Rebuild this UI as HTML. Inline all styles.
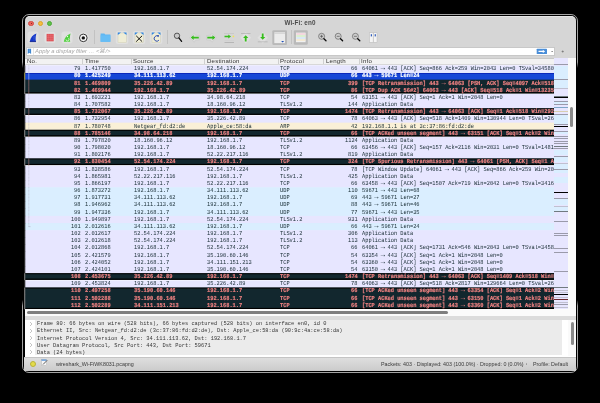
<!DOCTYPE html>
<html><head><meta charset="utf-8">
<style>
*{box-sizing:border-box;margin:0;padding:0}
html,body{width:600px;height:403px;overflow:hidden;background:#000}
body{position:relative;font-family:"Liberation Sans",sans-serif}
.abs{position:absolute}
#outline{position:absolute;left:22px;top:14px;width:556px;height:359px;border:1px solid #a4a4a4;border-radius:7px}
#win{position:absolute;left:24.8px;top:16.2px;width:550.8px;height:354px;background:#d6d6d6;border-radius:5px;overflow:hidden;box-shadow:inset 0 0.8px 0 #ececec}
.tl{position:absolute;width:5.8px;height:5.8px;border-radius:50%;top:20.5px}
#title{position:absolute;left:0;width:600px;top:19.3px;text-align:center;font-size:6.3px;will-change:transform;font-weight:bold;color:#4a4a4a;letter-spacing:0.1px}
.sep{position:absolute;top:30.3px;width:1px;height:13.5px;background:#c2c2c2}
#filter{position:absolute;left:26px;top:46.8px;width:529px;height:8.8px;background:#fff;border:0.5px solid #c8c8c8}
#ftext{position:absolute;left:35.2px;top:47.4px;font-size:5.85px;font-style:italic;color:#a6a6a6;line-height:8px;will-change:transform}
#hdr{position:absolute;left:25px;top:57.5px;width:529px;height:7.5px;background:#f2f2f2;border-bottom:0.5px solid #d8d8d8;border-top:0.5px solid #c8c8c8}
.h{position:absolute;top:57.2px;font-size:6.1px;color:#333;line-height:7px;letter-spacing:0.2px;will-change:transform}
.hs{position:absolute;top:59px;width:1px;height:5px;background:#cfcfcf}
#list{position:absolute;left:25px;top:65px;width:529px;height:244px;overflow:hidden;background:#fff}
.r{position:absolute;left:25px;width:529px;text-rendering:geometricPrecision;height:7.8px;font-family:"Liberation Mono",monospace;font-size:5.33px;line-height:7.17px;color:#12272e;white-space:nowrap;overflow:hidden}
.r span{position:absolute;top:0.9px;transform:scaleY(1.15);transform-origin:0 50%;will-change:transform}
.b{color:#f08282;font-weight:bold;-webkit-text-stroke:0.15px #f08282}
.s{color:#fff;font-weight:bold;-webkit-text-stroke:0.15px #fff}
.ar2{font-style:normal;display:inline-block;width:3.198px;text-align:left;text-indent:-2.0px;font-family:"Liberation Sans",sans-serif;font-size:7.2px;line-height:1px;font-weight:normal;-webkit-text-stroke:0}
.no{right:473.4px;text-align:right}
.tm{left:60px}.sr{left:109px}.ds{left:182px}.pr{left:255px}
.ln{right:196.4px;text-align:right}.in{left:336.6px}
#mm{position:absolute;left:554px;top:57.5px;width:13.5px;height:251.5px;background:#e7e6ff;overflow:hidden}
#vtrack{position:absolute;left:567.5px;top:57.5px;width:8px;height:251.5px;background:#fafafa}
#vthumb{position:absolute;left:570px;top:107.4px;width:3px;height:20px;border-radius:1.5px;background:#8a8a8a}
#hbar{position:absolute;left:25px;top:309px;width:551px;height:7px;background:#fbfbfb}
#hthumb{position:absolute;left:27px;top:311px;width:421px;height:3px;border-radius:1.5px;background:#7f7f7f}
#split{position:absolute;left:25px;top:316px;width:551px;height:4px;background:#dcdcdc}
#det{position:absolute;left:25px;top:320px;width:551px;height:36.5px;background:#fff}
#detbg{position:absolute;left:34.6px;top:320px;width:527px;height:35.3px;background:#ebebeb}
.d{position:absolute;left:36.5px;font-family:"Liberation Mono",monospace;font-size:5.36px;color:#363636;white-space:nowrap;line-height:7px;transform:scaleY(1.15);transform-origin:0 50%;will-change:transform}
.ar{position:absolute;left:29.3px;font-size:6px;color:#9a9a9a;line-height:7px;font-family:"Liberation Sans",sans-serif}
#status{position:absolute;left:24px;top:356.5px;width:552px;height:14.5px;background:linear-gradient(#dedede,#cbcbcb);border-top:0.5px solid #c4c4c4}
.st{position:absolute;top:360.9px;font-size:5.35px;color:#3a3a3a;line-height:6px;white-space:nowrap;will-change:transform}
</style></head><body>
<div id="outline"></div>
<div id="win"></div>
<div class="abs" style="left:21px;top:62px;width:3px;height:244px;background:linear-gradient(transparent,#000 6px,#000 238px,transparent)"></div>
<div class="abs" style="left:576px;top:62px;width:3px;height:244px;background:linear-gradient(transparent,#000 6px,#000 238px,transparent)"></div>
<div class="tl" style="left:28.4px;background:#ed6159;border:0.5px solid #d24c44"></div><div class="abs" style="left:30.6px;top:22.7px;width:1.4px;height:1.4px;border-radius:50%;background:#6e1a14"></div>
<div class="tl" style="left:37.5px;background:#f5bd3f;border:0.5px solid #dba32a"></div>
<div class="tl" style="left:46.5px;background:#5fc24a;border:0.5px solid #4aa836"></div>
<div id="title">Wi-Fi: en0</div>

<!-- toolbar icons -->
<svg class="abs" style="left:0;top:0" width="600" height="60" viewBox="0 0 600 60">
  <g fill="#e0e0e0">
    <rect x="27.5" y="31.5" width="11" height="12" rx="3"/>
    <rect x="44.5" y="32" width="11" height="11" rx="2.5"/>
    <rect x="61.5" y="31.5" width="11" height="12" rx="3"/>
    <circle cx="83.3" cy="37.9" r="5.6"/>
    <rect x="115.8" y="31" width="12.5" height="13" rx="2.5"/>
    <rect x="132.8" y="31" width="12.5" height="13" rx="2.5"/>
    <rect x="149.8" y="31" width="12.5" height="13" rx="2.5"/>

    <path d="M245.7 32 L251 37.7 L245.7 43.4 L240.4 37.7Z"/>
    <path d="M262.7 32 L268 37.7 L262.7 43.4 L257.4 37.7Z"/>
  </g>
  <!-- shark fin blue -->
  <path d="M29.8 41.6 C30.6 37.6 32.6 35 36.4 33.5 C35.6 36 35.4 38.8 35.9 41.6Z" fill="#1537c8"/>
  <path d="M29.8 41.6 h6.2" stroke="#0a1f90" stroke-width="0.9"/>
  <path d="M33 38 h2.5 M33.6 36.5 h1.8 M34 35.3 v5.5" stroke="#4a6ee0" stroke-width="0.35"/>
  <!-- stop red -->
  <rect x="46.6" y="33.9" width="7.1" height="7.4" fill="#df4f55"/>
  <path d="M48.4 34v7.3 M50.2 34v7.3 M52 34v7.3 M46.6 35.8h7.1 M46.6 37.6h7.1 M46.6 39.4h7.1" stroke="#ea8a8e" stroke-width="0.3"/>
  <!-- restart green fin -->
  <path d="M63.8 41.8 C64.6 37.8 66.6 35 70.6 33.4 C69.8 36 69.6 39 70.2 41.8Z" fill="#4fcf3d"/>
  <path d="M66 39.5 A1.5 1.5 0 1 0 68.3 38.2" fill="none" stroke="#f4fff0" stroke-width="0.8"/>
  <circle cx="67.5" cy="36.6" r="0.7" fill="#fff"/>
  <!-- options target -->
  <circle cx="83.3" cy="37.9" r="3.8" fill="#f8f8f8" stroke="#222" stroke-width="0.9"/>
  <circle cx="83.3" cy="37.9" r="1.7" fill="#111"/>
  <!-- folder -->
  <path d="M100.6 33.6 h3.8 l0.8 1 h5.2 v7.2 h-9.8z" fill="#5fb6f2"/>
  <rect x="100.6" y="35.3" width="9.8" height="6.5" fill="#66bdf5"/>
  <!-- file -->
  <g>
  <rect x="118" y="33" width="8.3" height="9.7" fill="#efedd6" stroke="#cfcdb6" stroke-width="0.5"/>
  <path d="M117.8 32.6 h3.2 l-3.2 2.4z M126.5 32.6 h-3.2 l3.2 2.4z" fill="#2f86e6"/>
  <rect x="135" y="33" width="8.3" height="9.7" fill="#efedd6" stroke="#cfcdb6" stroke-width="0.5"/>
  <path d="M134.8 32.6 h3.2 l-3.2 2.4z M143.5 32.6 h-3.2 l3.2 2.4z" fill="#2f86e6"/>
  <path d="M136.2 35.8 L142.1 41.6 M142.1 35.8 L136.2 41.6" stroke="#151515" stroke-width="1"/>
  <rect x="152" y="33" width="8.3" height="9.7" fill="#efedd6" stroke="#cfcdb6" stroke-width="0.5"/>
  <path d="M151.8 32.6 h3.2 l-3.2 2.4z M160.5 32.6 h-3.2 l3.2 2.4z" fill="#2f86e6"/>
  <path d="M158.2 36.2 A2.7 2.7 0 1 0 158.9 40.2" fill="none" stroke="#2f4fb0" stroke-width="1"/>
  <path d="M156.6 35.2 l2.4 -0.2 l-0.4 2.3z" fill="#2f4fb0"/>
  </g>
  <!-- find magnifier -->
  <circle cx="177" cy="35.8" r="2.7" fill="#c9c9c9" stroke="#3a3a3a" stroke-width="0.8"/>
  <path d="M178.9 37.9 L181.6 41.3" stroke="#0a0a0a" stroke-width="1.3" stroke-linecap="round"/>
  <!-- back arrow -->
  <g fill="#dcdcdc" stroke="#c2c2c2" stroke-width="0.45">
  <path d="M189.6 37.7 L194.2 33.2 L195.6 35.2 L199.6 35.6 L199.6 39.8 L195.6 40.2 L194.2 42.2Z"/>
  <path d="M216.5 37.7 L211.9 33.2 L210.5 35.2 L206.5 35.6 L206.5 39.8 L210.5 40.2 L211.9 42.2Z"/>
  </g>
  <path d="M190.8 37.6 L193.6 35.3 L193.6 36.7 L198.8 36.7 L198.8 38.5 L193.6 38.5 L193.6 39.9Z" fill="#36bd1c"/>
  <!-- forward arrow -->
  <path d="M215.3 37.6 L212.5 35.3 L212.5 36.7 L207.3 36.7 L207.3 38.5 L212.5 38.5 L212.5 39.9Z" fill="#36bd1c"/>
  <!-- go to packet -->
  <rect x="224" y="33" width="10" height="0.5" fill="#bdbdbd"/>
  <path d="M231 36.5 L228.3 34.4 L228.3 35.7 L224.5 35.7 L224.5 37.3 L228.3 37.3 L228.3 38.6Z" fill="#36bd1c"/>
  <circle cx="233.4" cy="36.4" r="0.9" fill="#f3e35a"/>
  <rect x="224.5" y="40.2" width="9.5" height="0.5" fill="#cfcfcf"/><rect x="224.5" y="42.3" width="9.5" height="0.7" fill="#a8a8a8"/>
  <!-- first packet -->
  <rect x="241" y="33.1" width="9.5" height="0.6" fill="#a8a8a8"/>
  <path d="M245.7 35.2 L243.1 37.9 L244.8 37.9 L244.8 41.4 L246.6 41.4 L246.6 37.9 L248.3 37.9Z" fill="#36bd1c"/>
  <!-- last packet -->
  <rect x="257.8" y="41.6" width="9.8" height="0.6" fill="#a8a8a8"/>
  <path d="M262.7 39.8 L260.1 37.1 L261.8 37.1 L261.8 33.6 L263.6 33.6 L263.6 37.1 L265.3 37.1Z" fill="#36bd1c"/>
  <!-- autoscroll pressed -->
  <rect x="272.3" y="30.3" width="14.7" height="14.7" rx="1.2" fill="#b9b9b9"/>
  <rect x="274.3" y="32.3" width="10.7" height="10.8" fill="#ececec"/>
  <rect x="274.3" y="33.3" width="10.7" height="0.6" fill="#c9c9c9"/>
  <path d="M281.1 41 L284.1 41 L282.6 42.6Z" fill="#1f4fb8"/>
  <!-- colorize pressed -->
  <rect x="293.8" y="30.2" width="14" height="14.6" rx="1.2" fill="#b9b9b9"/>
  <rect x="296" y="32.6" width="9.6" height="9.6" fill="#f0f0f0"/>
  <rect x="296.3" y="33.2" width="9" height="1.6" fill="#f5d2dc"/>
  <rect x="296.3" y="35.2" width="9" height="1.6" fill="#d6f0c8"/>
  <rect x="296.3" y="37.2" width="9" height="1.6" fill="#d4e6f8"/>
  <rect x="296.3" y="39.2" width="9" height="1.6" fill="#f6e8cc"/>
  <!-- zoom in/out/normal -->
  <g fill="#cfcfcf" stroke="#6a6a6a" stroke-width="0.75">
   <circle cx="321.6" cy="36.3" r="3"/>
   <circle cx="338.2" cy="36.3" r="3"/>
   <circle cx="355.4" cy="36.3" r="3"/>
  </g>
  <g fill="none" stroke="#3a3a3a" stroke-width="0.6">
   <path d="M320.1 36.3h3M321.6 34.8v3"/><path d="M336.7 36.3h3"/><path d="M353.9 36.3h3"/>
  </g>
  <g stroke="#0a0a0a" stroke-width="1.3" stroke-linecap="round">
   <path d="M323.9 38.7L326 40.8"/><path d="M340.5 38.7L342.6 40.8"/><path d="M357.7 38.7L359.8 40.8"/>
  </g>
  <!-- colorize stripes lighter -->
  <!-- resize columns -->
  <rect x="369.6" y="32.8" width="3.5" height="9.4" fill="#f4f4f4" stroke="#b5b5b5" stroke-width="0.4"/>
  <rect x="373.5" y="32.8" width="3.5" height="9.4" fill="#f4f4f4" stroke="#b5b5b5" stroke-width="0.4"/>
  <rect x="370.8" y="34.2" width="1.1" height="2.2" fill="#1f4fb8"/>
  <rect x="374.7" y="34.2" width="1.1" height="2.2" fill="#1f4fb8"/>
</svg>
<div class="sep" style="left:94.4px"></div>
<div class="sep" style="left:166.7px"></div>
<div class="sep" style="left:290.8px"></div>

<div id="filter"></div>
<svg class="abs" style="left:0;top:0" width="600" height="60">
  <path d="M27.7 48.7 h3.4 v5.3 l-1.7 -1.3 l-1.7 1.3z" fill="#3d86d0"/><path d="M29.4 49.3 v3" stroke="#8ab8e8" stroke-width="0.5"/>
  <rect x="33.1" y="47.6" width="0.5" height="7.6" fill="#d0d0d0"/>
  <rect x="536.7" y="48.7" width="10.3" height="5.3" rx="0.6" fill="#4a8ed8"/>
  <path d="M538.5 50.8 h4.3 v-1 l2.3 1.6 l-2.3 1.6 v-1 h-4.3z" fill="#fff"/>
  <path d="M551.2 51 h1.8 l-0.9 1.1z" fill="#444"/>
  <path d="M561.6 51.5 h2.2 M562.7 50.4 v2.2" stroke="#666" stroke-width="0.6"/>
</svg>
<div id="ftext">Apply a display filter … &lt;⌘/&gt;</div>

<div id="hdr"></div>
<div class="h" style="left:27.4px">No.</div>
<div class="hs" style="left:82px"></div>
<div class="h" style="left:85px">Time</div>
<div class="hs" style="left:131px"></div>
<div class="h" style="left:133px">Source</div>
<div class="hs" style="left:204px"></div>
<div class="h" style="left:206.6px">Destination</div>
<div class="hs" style="left:278px"></div>
<div class="h" style="left:280px">Protocol</div>
<div class="hs" style="left:323.3px"></div>
<div class="h" style="left:325.6px">Length</div>
<div class="hs" style="left:359px"></div>
<div class="h" style="left:361px">Info</div>

<div id="list"></div>
<svg class="abs" style="left:0;top:0" width="600" height="403"><rect x="25" y="65.300" width="529" height="7.770" fill="#e7e6ff"/><rect x="25" y="72.470" width="529" height="7.770" fill="#1546d6"/><rect x="25" y="72.170" width="529" height="0.9" fill="#f8f8ff"/><rect x="25" y="73.070" width="529" height="7.170" fill="#1546d6"/><rect x="25" y="73.070" width="529" height="0.9" fill="#0a24b8"/><rect x="25" y="79.640" width="529" height="13.740" fill="#12272e"/><rect x="25"  y="92.180" width="529" height="1.2" fill="#000" opacity="1.0"/><rect x="25" y="93.980" width="529" height="14.940" fill="#e7e6ff"/><rect x="25" y="108.320" width="529" height="6.570" fill="#12272e"/><rect x="25" y="108.320" width="529" height="1.0" fill="#000" opacity="0.95"/><rect x="25"  y="113.690" width="529" height="1.2" fill="#000" opacity="1.0"/><rect x="25" y="115.490" width="529" height="7.770" fill="#e7e6ff"/><rect x="25" y="122.660" width="529" height="7.770" fill="#faf0d7"/><rect x="25" y="129.830" width="529" height="6.570" fill="#12272e"/><rect x="25" y="129.830" width="529" height="1.0" fill="#000" opacity="0.95"/><rect x="25"  y="135.200" width="529" height="1.2" fill="#000" opacity="1.0"/><rect x="25" y="137.000" width="529" height="22.110" fill="#e7e6ff"/><rect x="25" y="158.510" width="529" height="6.570" fill="#12272e"/><rect x="25" y="158.510" width="529" height="1.0" fill="#000" opacity="0.95"/><rect x="25"  y="163.880" width="529" height="1.2" fill="#000" opacity="1.0"/><rect x="25" y="165.680" width="529" height="22.110" fill="#e7e6ff"/><rect x="25" y="187.190" width="529" height="29.280" fill="#daeeff"/><rect x="25" y="215.870" width="529" height="7.770" fill="#e7e6ff"/><rect x="25" y="223.040" width="529" height="7.770" fill="#daeeff"/><rect x="25" y="230.210" width="529" height="43.620" fill="#e7e6ff"/><rect x="25" y="273.230" width="529" height="6.570" fill="#12272e"/><rect x="25" y="273.230" width="529" height="1.0" fill="#000" opacity="0.95"/><rect x="25"  y="278.600" width="529" height="1.2" fill="#000" opacity="1.0"/><rect x="25" y="280.400" width="529" height="7.770" fill="#e7e6ff"/><rect x="25" y="287.570" width="529" height="21.510" fill="#12272e"/><rect x="25" y="287.570" width="529" height="1.0" fill="#000" opacity="0.95"/><rect x="25"  y="307.880" width="529" height="1.2" fill="#000" opacity="1.0"/><rect x="24" y="65.300" width="1.3" height="7.470" fill="#2a2a2a"/><line x1="28.8" y1="65.300" x2="28.8" y2="72.470" stroke="#b4b4c4" stroke-width="0.6" stroke-dasharray="0.8 0.6"/><rect x="24" y="72.470" width="1.3" height="7.470" fill="#8a8440"/><line x1="28.8" y1="72.470" x2="28.8" y2="79.640" stroke="#c8d0ff" stroke-width="0.6"/><rect x="24" y="79.640" width="1.3" height="7.470" fill="#6e6e6e"/><line x1="28.8" y1="79.640" x2="28.8" y2="86.810" stroke="#b87878" stroke-width="0.6"/><rect x="24" y="86.810" width="1.3" height="7.470" fill="#6e6e6e"/><line x1="28.8" y1="86.810" x2="28.8" y2="93.980" stroke="#b87878" stroke-width="0.6"/><rect x="24" y="93.980" width="1.3" height="7.470" fill="#2a2a2a"/><line x1="28.8" y1="93.980" x2="28.8" y2="101.150" stroke="#b4b4c4" stroke-width="0.6" stroke-dasharray="0.8 0.6"/><rect x="24" y="101.150" width="1.3" height="7.470" fill="#2a2a2a"/><line x1="28.8" y1="101.150" x2="28.8" y2="108.320" stroke="#b4b4c4" stroke-width="0.6" stroke-dasharray="0.8 0.6"/><rect x="24" y="108.320" width="1.3" height="7.470" fill="#6e6e6e"/><line x1="28.8" y1="108.320" x2="28.8" y2="115.490" stroke="#b87878" stroke-width="0.6"/><rect x="24" y="115.490" width="1.3" height="7.470" fill="#2a2a2a"/><line x1="28.8" y1="115.490" x2="28.8" y2="122.660" stroke="#b4b4c4" stroke-width="0.6" stroke-dasharray="0.8 0.6"/><rect x="24" y="122.660" width="1.3" height="7.470" fill="#2a2a2a"/><line x1="28.8" y1="122.660" x2="28.8" y2="129.830" stroke="#b4b4c4" stroke-width="0.6" stroke-dasharray="0.8 0.6"/><rect x="24" y="129.830" width="1.3" height="7.470" fill="#6e6e6e"/><line x1="28.8" y1="129.830" x2="28.8" y2="137.000" stroke="#b87878" stroke-width="0.6"/><rect x="24" y="137.000" width="1.3" height="7.470" fill="#2a2a2a"/><line x1="28.8" y1="137.000" x2="28.8" y2="144.170" stroke="#b4b4c4" stroke-width="0.6" stroke-dasharray="0.8 0.6"/><rect x="24" y="144.170" width="1.3" height="7.470" fill="#2a2a2a"/><line x1="28.8" y1="144.170" x2="28.8" y2="151.340" stroke="#b4b4c4" stroke-width="0.6" stroke-dasharray="0.8 0.6"/><rect x="24" y="151.340" width="1.3" height="7.470" fill="#2a2a2a"/><line x1="28.8" y1="151.340" x2="28.8" y2="158.510" stroke="#b4b4c4" stroke-width="0.6" stroke-dasharray="0.8 0.6"/><rect x="24" y="158.510" width="1.3" height="7.470" fill="#6e6e6e"/><line x1="28.8" y1="158.510" x2="28.8" y2="165.680" stroke="#b87878" stroke-width="0.6"/><rect x="24" y="165.680" width="1.3" height="7.470" fill="#2a2a2a"/><line x1="28.8" y1="165.680" x2="28.8" y2="172.850" stroke="#b4b4c4" stroke-width="0.6" stroke-dasharray="0.8 0.6"/><rect x="24" y="172.850" width="1.3" height="7.470" fill="#2a2a2a"/><line x1="28.8" y1="172.850" x2="28.8" y2="180.020" stroke="#b4b4c4" stroke-width="0.6" stroke-dasharray="0.8 0.6"/><rect x="24" y="180.020" width="1.3" height="7.470" fill="#2a2a2a"/><line x1="28.8" y1="180.020" x2="28.8" y2="187.190" stroke="#b4b4c4" stroke-width="0.6" stroke-dasharray="0.8 0.6"/><rect x="24" y="187.190" width="1.3" height="7.470" fill="#2a2a2a"/><line x1="28.8" y1="187.190" x2="28.8" y2="194.360" stroke="#b4b4c4" stroke-width="0.6" stroke-dasharray="0.8 0.6"/><rect x="24" y="194.360" width="1.3" height="7.470" fill="#2a2a2a"/><line x1="28.8" y1="194.360" x2="28.8" y2="201.530" stroke="#b4b4c4" stroke-width="0.6" stroke-dasharray="0.8 0.6"/><rect x="24" y="201.530" width="1.3" height="7.470" fill="#2a2a2a"/><line x1="28.8" y1="201.530" x2="28.8" y2="208.700" stroke="#b4b4c4" stroke-width="0.6" stroke-dasharray="0.8 0.6"/><rect x="24" y="208.700" width="1.3" height="7.470" fill="#2a2a2a"/><line x1="28.8" y1="208.700" x2="28.8" y2="215.870" stroke="#b4b4c4" stroke-width="0.6" stroke-dasharray="0.8 0.6"/><rect x="24" y="215.870" width="1.3" height="7.470" fill="#2a2a2a"/><line x1="28.8" y1="215.870" x2="28.8" y2="223.040" stroke="#b4b4c4" stroke-width="0.6" stroke-dasharray="0.8 0.6"/><rect x="24" y="223.040" width="1.3" height="7.470" fill="#2a2a2a"/><line x1="28.8" y1="223.040" x2="28.8" y2="226.625" stroke="#b4b4c4" stroke-width="0.6" stroke-dasharray="0.8 0.6"/><line x1="28.5" y1="226.625" x2="30.5" y2="226.625" stroke="#b4b4c4" stroke-width="0.6"/><rect x="24" y="230.210" width="1.3" height="7.470" fill="#2a2a2a"/><rect x="24" y="237.380" width="1.3" height="7.470" fill="#2a2a2a"/><rect x="24" y="244.550" width="1.3" height="7.470" fill="#2a2a2a"/><rect x="24" y="251.720" width="1.3" height="7.470" fill="#2a2a2a"/><rect x="24" y="258.890" width="1.3" height="7.470" fill="#2a2a2a"/><rect x="24" y="266.060" width="1.3" height="7.470" fill="#2a2a2a"/><rect x="24" y="273.230" width="1.3" height="7.470" fill="#6e6e6e"/><rect x="24" y="280.400" width="1.3" height="7.470" fill="#2a2a2a"/><rect x="24" y="287.570" width="1.3" height="7.470" fill="#6e6e6e"/><rect x="24" y="294.740" width="1.3" height="7.470" fill="#6e6e6e"/><rect x="24" y="301.910" width="1.3" height="7.470" fill="#6e6e6e"/></svg><div class="r t" style="top:65.30px"><span class="no">79</span><span class="tm">1.417750</span><span class="sr">192.168.1.7</span><span class="ds">52.54.174.224</span><span class="pr">TCP</span><span class="ln">66</span><span class="in">64061 <i class="ar2">→</i> 443 [ACK] Seq=866 Ack=259 Win=2043 Len=0 TSval=3458077431</span></div>
<div class="r s" style="top:72.47px"><span class="no">80</span><span class="tm">1.425249</span><span class="sr">34.111.113.62</span><span class="ds">192.168.1.7</span><span class="pr">UDP</span><span class="ln">66</span><span class="in">443 <i class="ar2">→</i> 59671 Len=24</span></div>
<div class="r b" style="top:79.64px"><span class="no">81</span><span class="tm">1.469809</span><span class="sr">35.226.42.89</span><span class="ds">192.168.1.7</span><span class="pr">TCP</span><span class="ln">399</span><span class="in">[TCP Retransmission] 443 <i class="ar2">→</i> 64063 [PSH, ACK] Seq=4097 Ack=518 Win=13235</span></div>
<div class="r b" style="top:86.81px"><span class="no">82</span><span class="tm">1.469944</span><span class="sr">192.168.1.7</span><span class="ds">35.226.42.89</span><span class="pr">TCP</span><span class="ln">86</span><span class="in">[TCP Dup ACK 56#2] 64063 <i class="ar2">→</i> 443 [ACK] Seq=518 Ack=1 Win=132352 Len=0</span></div>
<div class="r t" style="top:93.98px"><span class="no">83</span><span class="tm">1.693221</span><span class="sr">192.168.1.7</span><span class="ds">34.98.64.218</span><span class="pr">TCP</span><span class="ln">54</span><span class="in">63151 <i class="ar2">→</i> 443 [ACK] Seq=1 Ack=1 Win=2048 Len=0</span></div>
<div class="r t" style="top:101.15px"><span class="no">84</span><span class="tm">1.707582</span><span class="sr">192.168.1.7</span><span class="ds">18.160.96.12</span><span class="pr">TLSv1.2</span><span class="ln">144</span><span class="in">Application Data</span></div>
<div class="r b" style="top:108.32px"><span class="no">85</span><span class="tm">1.732067</span><span class="sr">35.226.42.89</span><span class="ds">192.168.1.7</span><span class="pr">TCP</span><span class="ln">1474</span><span class="in">[TCP Retransmission] 443 <i class="ar2">→</i> 64063 [ACK] Seq=1 Ack=518 Win=29248</span></div>
<div class="r t" style="top:115.49px"><span class="no">86</span><span class="tm">1.732954</span><span class="sr">192.168.1.7</span><span class="ds">35.226.42.89</span><span class="pr">TCP</span><span class="ln">78</span><span class="in">64063 <i class="ar2">→</i> 443 [ACK] Seq=518 Ack=1409 Win=130944 Len=0 TSval=2622</span></div>
<div class="r a" style="top:122.66px"><span class="no">87</span><span class="tm">1.780748</span><span class="sr">Netgear_fd:d2:de</span><span class="ds">Apple_ce:58:da</span><span class="pr">ARP</span><span class="ln">42</span><span class="in">192.168.1.1 is at 3c:37:86:fd:d2:de</span></div>
<div class="r b" style="top:129.83px"><span class="no">88</span><span class="tm">1.785146</span><span class="sr">34.98.64.218</span><span class="ds">192.168.1.7</span><span class="pr">TCP</span><span class="ln">66</span><span class="in">[TCP ACKed unseen segment] 443 <i class="ar2">→</i> 63151 [ACK] Seq=1 Ack=2 Win=2048</span></div>
<div class="r t" style="top:137.00px"><span class="no">89</span><span class="tm">1.797820</span><span class="sr">18.160.96.12</span><span class="ds">192.168.1.7</span><span class="pr">TLSv1.2</span><span class="ln">1124</span><span class="in">Application Data</span></div>
<div class="r t" style="top:144.17px"><span class="no">90</span><span class="tm">1.798020</span><span class="sr">192.168.1.7</span><span class="ds">18.160.96.12</span><span class="pr">TCP</span><span class="ln">66</span><span class="in">63456 <i class="ar2">→</i> 443 [ACK] Seq=157 Ack=2116 Win=2031 Len=0 TSval=1481234</span></div>
<div class="r t" style="top:151.34px"><span class="no">91</span><span class="tm">1.802176</span><span class="sr">192.168.1.7</span><span class="ds">52.22.217.116</span><span class="pr">TLSv1.2</span><span class="ln">819</span><span class="in">Application Data</span></div>
<div class="r b" style="top:158.51px"><span class="no">92</span><span class="tm">1.830454</span><span class="sr">52.54.174.224</span><span class="ds">192.168.1.7</span><span class="pr">TCP</span><span class="ln">324</span><span class="in">[TCP Spurious Retransmission] 443 <i class="ar2">→</i> 64061 [PSH, ACK] Seq=1 Ack=866</span></div>
<div class="r t" style="top:165.68px"><span class="no">93</span><span class="tm">1.838586</span><span class="sr">192.168.1.7</span><span class="ds">52.54.174.224</span><span class="pr">TCP</span><span class="ln">78</span><span class="in">[TCP Window Update] 64061 <i class="ar2">→</i> 443 [ACK] Seq=866 Ack=259 Win=2048</span></div>
<div class="r t" style="top:172.85px"><span class="no">94</span><span class="tm">1.865981</span><span class="sr">52.22.217.116</span><span class="ds">192.168.1.7</span><span class="pr">TLSv1.2</span><span class="ln">425</span><span class="in">Application Data</span></div>
<div class="r t" style="top:180.02px"><span class="no">95</span><span class="tm">1.866197</span><span class="sr">192.168.1.7</span><span class="ds">52.22.217.116</span><span class="pr">TCP</span><span class="ln">66</span><span class="in">63458 <i class="ar2">→</i> 443 [ACK] Seq=1507 Ack=719 Win=2042 Len=0 TSval=3416123</span></div>
<div class="r u" style="top:187.19px"><span class="no">96</span><span class="tm">1.873272</span><span class="sr">192.168.1.7</span><span class="ds">34.111.113.62</span><span class="pr">UDP</span><span class="ln">110</span><span class="in">59671 <i class="ar2">→</i> 443 Len=68</span></div>
<div class="r u" style="top:194.36px"><span class="no">97</span><span class="tm">1.917731</span><span class="sr">34.111.113.62</span><span class="ds">192.168.1.7</span><span class="pr">UDP</span><span class="ln">69</span><span class="in">443 <i class="ar2">→</i> 59671 Len=27</span></div>
<div class="r u" style="top:201.53px"><span class="no">98</span><span class="tm">1.946962</span><span class="sr">34.111.113.62</span><span class="ds">192.168.1.7</span><span class="pr">UDP</span><span class="ln">88</span><span class="in">443 <i class="ar2">→</i> 59671 Len=46</span></div>
<div class="r u" style="top:208.70px"><span class="no">99</span><span class="tm">1.947336</span><span class="sr">192.168.1.7</span><span class="ds">34.111.113.62</span><span class="pr">UDP</span><span class="ln">77</span><span class="in">59671 <i class="ar2">→</i> 443 Len=35</span></div>
<div class="r t" style="top:215.87px"><span class="no">100</span><span class="tm">1.949897</span><span class="sr">192.168.1.7</span><span class="ds">52.54.174.224</span><span class="pr">TLSv1.2</span><span class="ln">931</span><span class="in">Application Data</span></div>
<div class="r u" style="top:223.04px"><span class="no">101</span><span class="tm">2.012616</span><span class="sr">34.111.113.62</span><span class="ds">192.168.1.7</span><span class="pr">UDP</span><span class="ln">66</span><span class="in">443 <i class="ar2">→</i> 59671 Len=24</span></div>
<div class="r t" style="top:230.21px"><span class="no">102</span><span class="tm">2.012617</span><span class="sr">52.54.174.224</span><span class="ds">192.168.1.7</span><span class="pr">TLSv1.2</span><span class="ln">306</span><span class="in">Application Data</span></div>
<div class="r t" style="top:237.38px"><span class="no">103</span><span class="tm">2.012618</span><span class="sr">52.54.174.224</span><span class="ds">192.168.1.7</span><span class="pr">TLSv1.2</span><span class="ln">113</span><span class="in">Application Data</span></div>
<div class="r t" style="top:244.55px"><span class="no">104</span><span class="tm">2.012868</span><span class="sr">192.168.1.7</span><span class="ds">52.54.174.224</span><span class="pr">TCP</span><span class="ln">66</span><span class="in">64061 <i class="ar2">→</i> 443 [ACK] Seq=1731 Ack=546 Win=2043 Len=0 TSval=3458123</span></div>
<div class="r t" style="top:251.72px"><span class="no">105</span><span class="tm">2.421579</span><span class="sr">192.168.1.7</span><span class="ds">35.190.60.146</span><span class="pr">TCP</span><span class="ln">54</span><span class="in">63354 <i class="ar2">→</i> 443 [ACK] Seq=1 Ack=1 Win=2048 Len=0</span></div>
<div class="r t" style="top:258.89px"><span class="no">106</span><span class="tm">2.424052</span><span class="sr">192.168.1.7</span><span class="ds">34.111.151.213</span><span class="pr">TCP</span><span class="ln">54</span><span class="in">63360 <i class="ar2">→</i> 443 [ACK] Seq=1 Ack=1 Win=2048 Len=0</span></div>
<div class="r t" style="top:266.06px"><span class="no">107</span><span class="tm">2.424101</span><span class="sr">192.168.1.7</span><span class="ds">35.190.60.146</span><span class="pr">TCP</span><span class="ln">54</span><span class="in">63150 <i class="ar2">→</i> 443 [ACK] Seq=1 Ack=1 Win=2048 Len=0</span></div>
<div class="r b" style="top:273.23px"><span class="no">108</span><span class="tm">2.453675</span><span class="sr">35.226.42.89</span><span class="ds">192.168.1.7</span><span class="pr">TCP</span><span class="ln">1474</span><span class="in">[TCP Retransmission] 443 <i class="ar2">→</i> 64063 [ACK] Seq=1409 Ack=518 Win=29248</span></div>
<div class="r t" style="top:280.40px"><span class="no">109</span><span class="tm">2.453824</span><span class="sr">192.168.1.7</span><span class="ds">35.226.42.89</span><span class="pr">TCP</span><span class="ln">78</span><span class="in">64063 <i class="ar2">→</i> 443 [ACK] Seq=518 Ack=2817 Win=129664 Len=0 TSval=2622</span></div>
<div class="r b" style="top:287.57px"><span class="no">110</span><span class="tm">2.497258</span><span class="sr">35.190.60.146</span><span class="ds">192.168.1.7</span><span class="pr">TCP</span><span class="ln">66</span><span class="in">[TCP ACKed unseen segment] 443 <i class="ar2">→</i> 63354 [ACK] Seq=1 Ack=2 Win=2048</span></div>
<div class="r b" style="top:294.74px"><span class="no">111</span><span class="tm">2.502288</span><span class="sr">35.190.60.146</span><span class="ds">192.168.1.7</span><span class="pr">TCP</span><span class="ln">66</span><span class="in">[TCP ACKed unseen segment] 443 <i class="ar2">→</i> 63150 [ACK] Seq=1 Ack=2 Win=2048</span></div>
<div class="r b" style="top:301.91px"><span class="no">112</span><span class="tm">2.502289</span><span class="sr">34.111.151.213</span><span class="ds">192.168.1.7</span><span class="pr">TCP</span><span class="ln">66</span><span class="in">[TCP ACKed unseen segment] 443 <i class="ar2">→</i> 63360 [ACK] Seq=1 Ack=2 Win=2048</span></div>

<div id="mm"><div style="position:absolute;left:0;right:0;top:6.50px;height:0.9px;background:#9a9aaa"></div><div style="position:absolute;left:0;right:0;top:8.00px;height:13.5px;background:#daeeff"></div><div style="position:absolute;left:0;right:0;top:21.70px;height:0.9px;background:#9a9aaa"></div><div style="position:absolute;left:0;right:0;top:22.80px;height:8px;background:#daeeff"></div><div style="position:absolute;left:0;right:0;top:30.90px;height:0.8px;background:#c0c0d0"></div><div style="position:absolute;left:0;right:0;top:38.30px;height:0.9px;background:#707a80"></div><div style="position:absolute;left:0;right:0;top:39.50px;height:1.1px;background:#000"></div><div style="position:absolute;left:0;right:0;top:43.10px;height:0.8px;background:#9a9aaa"></div><div style="position:absolute;left:0;right:0;top:44.00px;height:2.4px;background:#daeeff"></div><div style="position:absolute;left:0;right:0;top:46.20px;height:0.8px;background:#9a9aaa"></div><div style="position:absolute;left:0;right:0;top:49.50px;height:0.9px;background:#7fa6c8"></div><div style="position:absolute;left:0;right:0;top:53.40px;height:1.1px;background:#d8ceb0"></div><div style="position:absolute;left:0;right:0;top:56.00px;height:0.8px;background:#9a9aaa"></div><div style="position:absolute;left:0;right:0;top:57.00px;height:9.8px;background:#daeeff"></div><div style="position:absolute;left:0;right:0;top:66.90px;height:0.8px;background:#9a9aaa"></div><div style="position:absolute;left:0;right:0;top:68.80px;height:1.2px;background:#000"></div><div style="position:absolute;left:0;right:0;top:73.30px;height:0.8px;background:#9a9aaa"></div><div style="position:absolute;left:0;right:0;top:74.30px;height:2.2px;background:#daeeff"></div><div style="position:absolute;left:0;right:0;top:78.30px;height:0.9px;background:#9a9aaa"></div><div style="position:absolute;left:0;right:0;top:80.10px;height:0.8px;background:#9a9aaa"></div><div style="position:absolute;left:0;right:0;top:83.60px;height:0.8px;background:#9a9aaa"></div><div style="position:absolute;left:0;right:0;top:85.60px;height:0.8px;background:#9a9aaa"></div><div style="position:absolute;left:0;right:0;top:88.10px;height:0.9px;background:#707a80"></div><div style="position:absolute;left:0;right:0;top:90.60px;height:0.8px;background:#9a9aaa"></div><div style="position:absolute;left:0;right:0;top:92.40px;height:5.5px;background:#daeeff"></div><div style="position:absolute;left:0;right:0;top:98.40px;height:0.9px;background:#9a9aaa"></div><div style="position:absolute;left:0;right:0;top:99.70px;height:5px;background:#daeeff"></div><div style="position:absolute;left:0;right:0;top:105.40px;height:0.8px;background:#c0c0d0"></div><div style="position:absolute;left:0;right:0;top:106.30px;height:5px;background:#daeeff"></div><div style="position:absolute;left:0;right:0;top:111.30px;height:0.9px;background:#9a9aaa"></div><div style="position:absolute;left:0;right:0;top:112.40px;height:2.8px;background:#daeeff"></div><div style="position:absolute;left:0;right:0;top:119.50px;height:6px;background:#daeeff"></div><div style="position:absolute;left:0;right:0;top:134.90px;height:1.1px;background:#000"></div><div style="position:absolute;left:0;right:0;top:140.40px;height:0.9px;background:#9a9aaa"></div><div style="position:absolute;left:0;right:0;top:141.50px;height:5.5px;background:#daeeff"></div><div style="position:absolute;left:0;right:0;top:148.90px;height:0.8px;background:#c0c0d0"></div><div style="position:absolute;left:0;right:0;top:149.80px;height:3.8px;background:#daeeff"></div><div style="position:absolute;left:0;right:0;top:153.80px;height:1px;background:#707a80"></div><div style="position:absolute;left:0;right:0;top:163.60px;height:0.9px;background:#9a9aaa"></div><div style="position:absolute;left:0;right:0;top:175.00px;height:0.9px;background:#9a9aaa"></div><div style="position:absolute;left:0;right:0;top:177.50px;height:0.9px;background:#9a9aaa"></div><div style="position:absolute;left:0;right:0;top:190.80px;height:0.9px;background:#9a9aaa"></div><div style="position:absolute;left:0;right:0;top:194.30px;height:0.9px;background:#9a9aaa"></div><div style="position:absolute;left:0;right:0;top:213.50px;height:0.9px;background:#9a9aaa"></div><div style="position:absolute;left:0;right:0;top:229.70px;height:0.9px;background:#707a80"></div><div style="position:absolute;left:0;right:0;top:232.00px;height:0.7px;background:#c0c0d0"></div><div style="position:absolute;left:0;right:0;top:234.60px;height:0.7px;background:#c0c0d0"></div><div style="position:absolute;left:0;right:0;top:236.80px;height:1.1px;background:#000"></div><div style="position:absolute;left:0;right:0;top:239.70px;height:0.7px;background:#c0c0d0"></div><div style="position:absolute;left:0;right:0;top:241.80px;height:1px;background:#6a2830"></div><div style="position:absolute;left:0;right:0;top:244.70px;height:0.7px;background:#c0c0d0"></div><div style="position:absolute;left:0;right:0;top:246.70px;height:0.8px;background:#9a9aaa"></div><div style="position:absolute;left:0;right:0;top:249.50px;height:0.7px;background:#c0c0d0"></div></div>
<div id="vtrack"></div>
<div id="vthumb"></div>

<div id="hbar"></div>
<div id="hthumb"></div>
<div id="split"></div>
<div id="det"></div>
<div id="detbg"></div>
<svg class="abs" style="left:29px;top:320.80px" width="4" height="6"><path d="M1 1 L3 3 L1 5" fill="none" stroke="#a0a0a0" stroke-width="0.6"/></svg><div class="d" style="top:321.2px">Frame 80: 66 bytes on wire (528 bits), 66 bytes captured (528 bits) on interface en0, id 0</div>
<svg class="abs" style="left:29px;top:327.95px" width="4" height="6"><path d="M1 1 L3 3 L1 5" fill="none" stroke="#a0a0a0" stroke-width="0.6"/></svg><div class="d" style="top:328.35px">Ethernet II, Src: Netgear_fd:d2:de (3c:37:86:fd:d2:de), Dst: Apple_ce:58:da (90:9c:4a:ce:58:da)</div>
<svg class="abs" style="left:29px;top:335.10px" width="4" height="6"><path d="M1 1 L3 3 L1 5" fill="none" stroke="#a0a0a0" stroke-width="0.6"/></svg><div class="d" style="top:335.5px">Internet Protocol Version 4, Src: 34.111.113.62, Dst: 192.168.1.7</div>
<svg class="abs" style="left:29px;top:342.25px" width="4" height="6"><path d="M1 1 L3 3 L1 5" fill="none" stroke="#a0a0a0" stroke-width="0.6"/></svg><div class="d" style="top:342.65px">User Datagram Protocol, Src Port: 443, Dst Port: 59671</div>
<svg class="abs" style="left:29px;top:349.40px" width="4" height="6"><path d="M1 1 L3 3 L1 5" fill="none" stroke="#a0a0a0" stroke-width="0.6"/></svg><div class="d" style="top:349.8px">Data (24 bytes)</div>
<div id="dscroll" class="abs" style="left:568px;top:320px;width:8px;height:36px;background:#fafafa"></div>
<div class="abs" style="left:570.5px;top:322px;width:3px;height:23px;border-radius:1.5px;background:#8a8a8a"></div>

<div id="status"></div>
<div class="abs" style="left:29.7px;top:360.7px;width:6px;height:6px;border-radius:50%;background:#e4dc4a;border:0.5px solid #b9b23a"></div>
<svg class="abs" style="left:0;top:350px" width="60" height="20">
  <rect x="41.5" y="9.5" width="5" height="6" fill="#f6f6f6" stroke="#aaa" stroke-width="0.4"/>
  <rect x="41.5" y="9.5" width="5" height="1.2" fill="#4a8ed8"/>
  <path d="M43 14.5 L47.2 10.3" stroke="#333" stroke-width="0.8"/>
</svg>
<div class="st" style="left:56px">wireshark_Wi-FiWK8031.pcapng</div>
<div class="st" style="left:380.5px">Packets: 403 · Displayed: 403 (100.0%) · Dropped: 0 (0.0%)</div>
<div class="abs" style="left:526.3px;top:363.4px;width:1.2px;height:1.2px;border-radius:50%;background:#999"></div>
<div class="st" style="left:533.2px">Profile: Default</div>
</body></html>
